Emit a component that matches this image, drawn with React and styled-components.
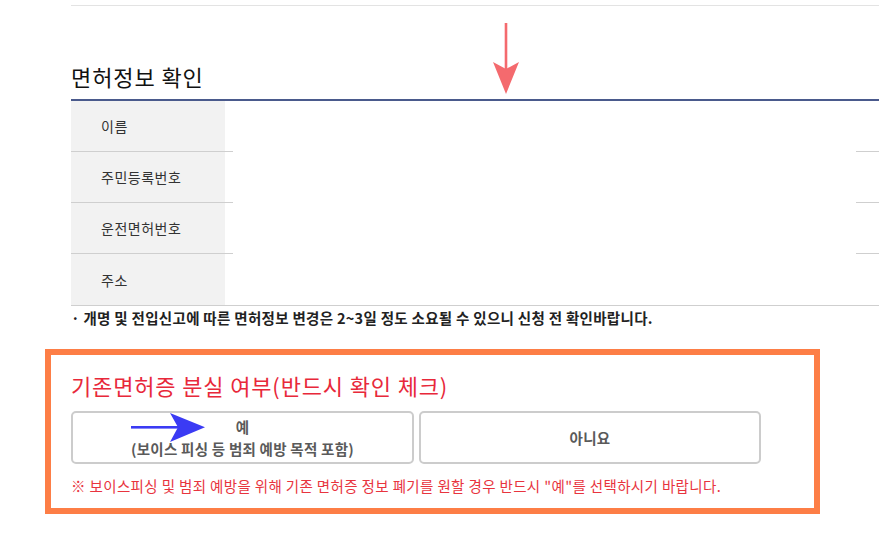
import React from "react";
import styled, { createGlobalStyle } from "styled-components";

const Global = createGlobalStyle`
  html, body { margin: 0; padding: 0; background: #fff; }
  body { font-family: "Noto Sans CJK KR", "Noto Sans", sans-serif; color: #222; }
`;

const Page = styled.div`
  position: relative;
  width: 879px;
  height: 535px;
  overflow: hidden;
  padding-top: 5px;
  padding-left: 45px;
  box-sizing: border-box;
`;

const TopRule = styled.div`
  margin-left: 26px;
  height: 1px;
  background: #e3e3e3;
`;

const Section = styled.section`
  margin-left: 26px;
  position: relative;
`;

const Title = styled.h2`
  margin: 0;
  padding-top: 55px;
  height: 95px;
  box-sizing: border-box;
  font-size: 22px;
  line-height: 30px;
  letter-spacing: 0.9px;
  font-weight: 400;
  color: #111;
  border-bottom: 2px solid #4a5a8c;
`;

const Table = styled.div`
  position: relative;
  display: flex;
  flex-direction: column;
  border-bottom: 1px solid #cfcfcf;
`;

const Row = styled.div`
  display: grid;
  grid-template-columns: 154px 1fr;
  height: 51px;
  box-sizing: border-box;
  border-bottom: ${p => (p.$last ? "none" : "1px solid #cfcfcf")};
`;

const Label = styled.div`
  display: flex;
  align-items: center;
  padding-left: 30px;
  background: #f2f2f2;
  font-size: 14px;
  letter-spacing: 0.5px;
  color: #333;
`;

const Value = styled.div`
  background: #fff;
`;

const Mask = styled.div`
  position: absolute;
  left: 162px;
  top: 0;
  width: 623px;
  bottom: 0;
  background: #fff;
`;

const Note = styled.p`
  margin: 2px 0 0;
  font-size: 14.5px;
  line-height: 20px;
  letter-spacing: 0.3px;
  font-weight: 700;
  color: #222;
`;

const AlertBox = styled.div`
  margin-top: 21px;
  width: 775px;
  height: 165px;
  box-sizing: border-box;
  border: 6px solid #fd7e46;
  padding: 15px 0 0 20px;
`;

const AlertTitle = styled.h3`
  margin: 0;
  font-size: 22px;
  line-height: 30px;
  letter-spacing: 0.85px;
  font-weight: 400;
  color: #e8283a;
`;

const Choices = styled.div`
  margin-top: 11px;
  width: 690px;
  display: grid;
  grid-template-columns: 343px 342px;
  gap: 5px;
`;

const Choice = styled.button`
  position: relative;
  height: 53px;
  box-sizing: border-box;
  border: 2px solid #cccccc;
  border-radius: 5px;
  background: #fff;
  font-family: inherit;
  font-size: 14.5px;
  line-height: 22px;
  letter-spacing: 0.25px;
  font-weight: 700;
  color: #5a5a5a;
  padding: 0;
  display: flex;
  flex-direction: column;
  align-items: center;
  justify-content: center;
`;

const Notice = styled.p`
  margin: 12px 0 0;
  font-size: 14.5px;
  line-height: 20px;
  letter-spacing: 0.37px;
  color: #e8343e;
`;

const DownArrow = styled.svg`
  position: absolute;
  left: 493px;
  top: 23px;
`;

const RightArrow = styled.svg`
  position: absolute;
  left: 58px;
  top: 0px;
`;

const rows = ["이름", "주민등록번호", "운전면허번호", "주소"];

export default function App() {
  return (
    <>
      <Global />
      <Page>
        <TopRule />
        <Section>
          <Title>면허정보 확인</Title>
          <Table>
            {rows.map((r, i) => (
              <Row key={r} $last={i === rows.length - 1}>
                <Label>{r}</Label>
                <Value />
              </Row>
            ))}
            <Mask />
          </Table>
          <Note>· 개명 및 전입신고에 따른 면허정보 변경은 2~3일 정도 소요될 수 있으니 신청 전 확인바랍니다.</Note>
        </Section>
        <AlertBox>
          <AlertTitle>기존면허증 분실 여부(반드시 확인 체크)</AlertTitle>
          <Choices>
            <Choice>
              <span>예</span>
              <span>(보이스 피싱 등 범죄 예방 목적 포함)</span>
              <RightArrow width="74" height="29" viewBox="0 0 74 29">
                <rect x="0" y="13" width="48" height="2.6" fill="#3b3bf4" />
                <polygon points="39,0 47,14.3 39,29 74,14.3" fill="#3b3bf4" />
              </RightArrow>
            </Choice>
            <Choice>
              <span>아니요</span>
            </Choice>
          </Choices>
          <Notice>※ 보이스피싱 및 범죄 예방을 위해 기존 면허증 정보 폐기를 원할 경우 반드시 "예"를 선택하시기 바랍니다.</Notice>
        </AlertBox>
        <DownArrow width="26" height="71" viewBox="0 0 26 71">
          <rect x="11.7" y="0" width="2.6" height="46" fill="#f46a6e" />
          <polygon points="0,39 13,46 26,39 13,71" fill="#f46a6e" />
        </DownArrow>
      </Page>
    </>
  );
}
